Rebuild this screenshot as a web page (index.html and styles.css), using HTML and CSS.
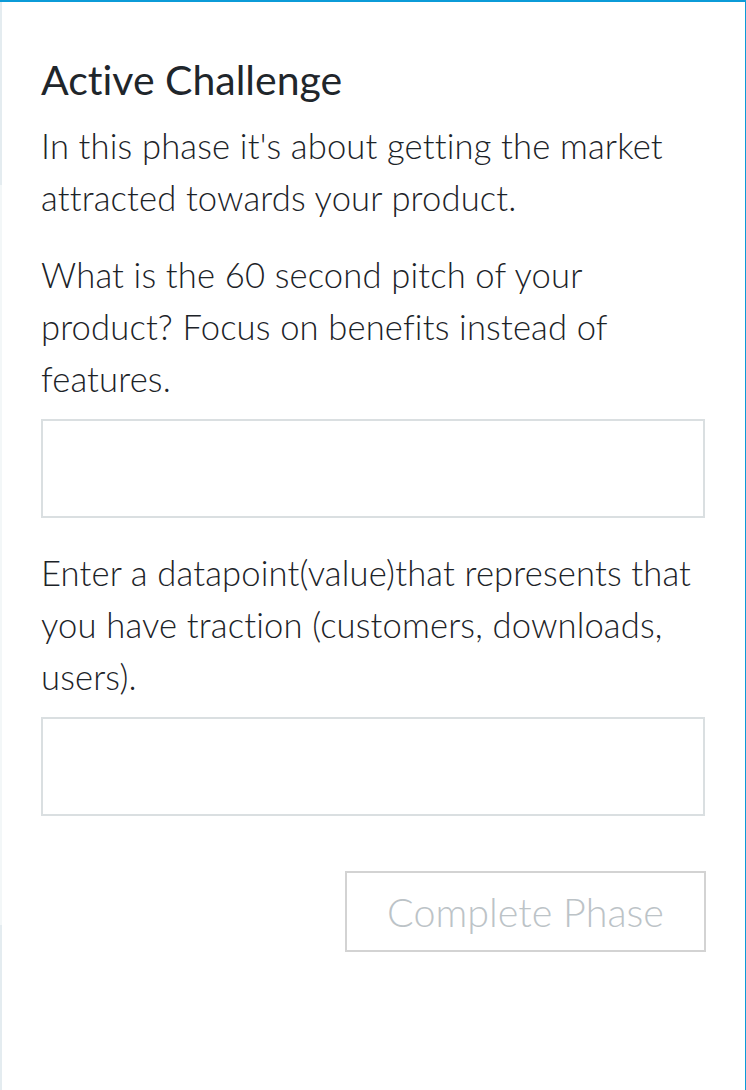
FILE: index.html
```html
<!DOCTYPE html>
<html lang="en">
<head>
<meta charset="utf-8">
<title>Active Challenge</title>
<link rel="stylesheet" href="styles.css">
</head>
<body>
<div class="frame">
  <section class="panel">
    <h1 class="title">Active Challenge</h1>
    <p class="intro">In this phase it's about getting the market attracted towards your product.</p>
    <label class="question" for="q1">What is the 60 second pitch of your product? Focus on benefits instead of features.</label>
    <input class="answer" id="q1" type="text">
    <label class="question question--second" for="q2">Enter a datapoint(value)that represents that you have traction (customers, downloads, users).</label>
    <input class="answer" id="q2" type="text">
    <div class="actions">
      <button class="complete" type="button">Complete Phase</button>
    </div>
  </section>
</div>
</body>
</html>
```

FILE: styles.css
```css
html, body {
  margin: 0;
  padding: 0;
  background: #ffffff;
}

body {
  font-family: Lato, "Open Sans", sans-serif;
  font-variant-ligatures: none;
  color: #1c2328;
}

.frame {
  box-sizing: border-box;
  width: 746px;
  height: 1090px;
  border-top: 2px solid #0b9bd8;
  border-right: 1px solid #0b9bd8;
  padding-left: 2px;
  background:
    linear-gradient(to bottom,
      #e4ecf0 0, #e4ecf0 183px,
      #f3f7f8 183px, #f3f7f8 923px,
      #e4ecf0 923px, #e4ecf0 100%) left top / 2px 100% no-repeat,
    #ffffff;
}

.panel {
  display: flex;
  flex-direction: column;
  padding: 50px 39px 0 39px;
}

.title {
  margin: 0;
  font-size: 41px;
  font-weight: 400;
  line-height: 56px;
  color: #1f262b;
}

.intro,
.question {
  margin: 0;
  font-size: 34.6px;
  letter-spacing: 0.15px;
  font-weight: 300;
  line-height: 52px;
  color: #1c2328;
}

.intro {
  margin-top: 12px;
}

.question {
  margin-top: 25px;
}

.question--second {
  margin-top: 29px;
}

.answer {
  box-sizing: border-box;
  display: block;
  width: 664px;
  height: 99px;
  margin: 14px 0 0 0;
  border: 2px solid #dadfe1;
  border-radius: 0;
  background: #ffffff;
  outline: none;
  padding: 0 16px;
  font-family: inherit;
  font-size: 30px;
}

.actions {
  display: flex;
  justify-content: flex-end;
  margin-top: 55px;
}

.complete {
  box-sizing: border-box;
  width: 361px;
  height: 81px;
  border: 2px solid #d3d3d3;
  background: #ffffff;
  font-family: Lato, "Open Sans", sans-serif;
  font-variant-ligatures: none;
  font-size: 39.5px;
  font-weight: 300;
  color: #bcc3c7;
  padding: 0;
}
```
